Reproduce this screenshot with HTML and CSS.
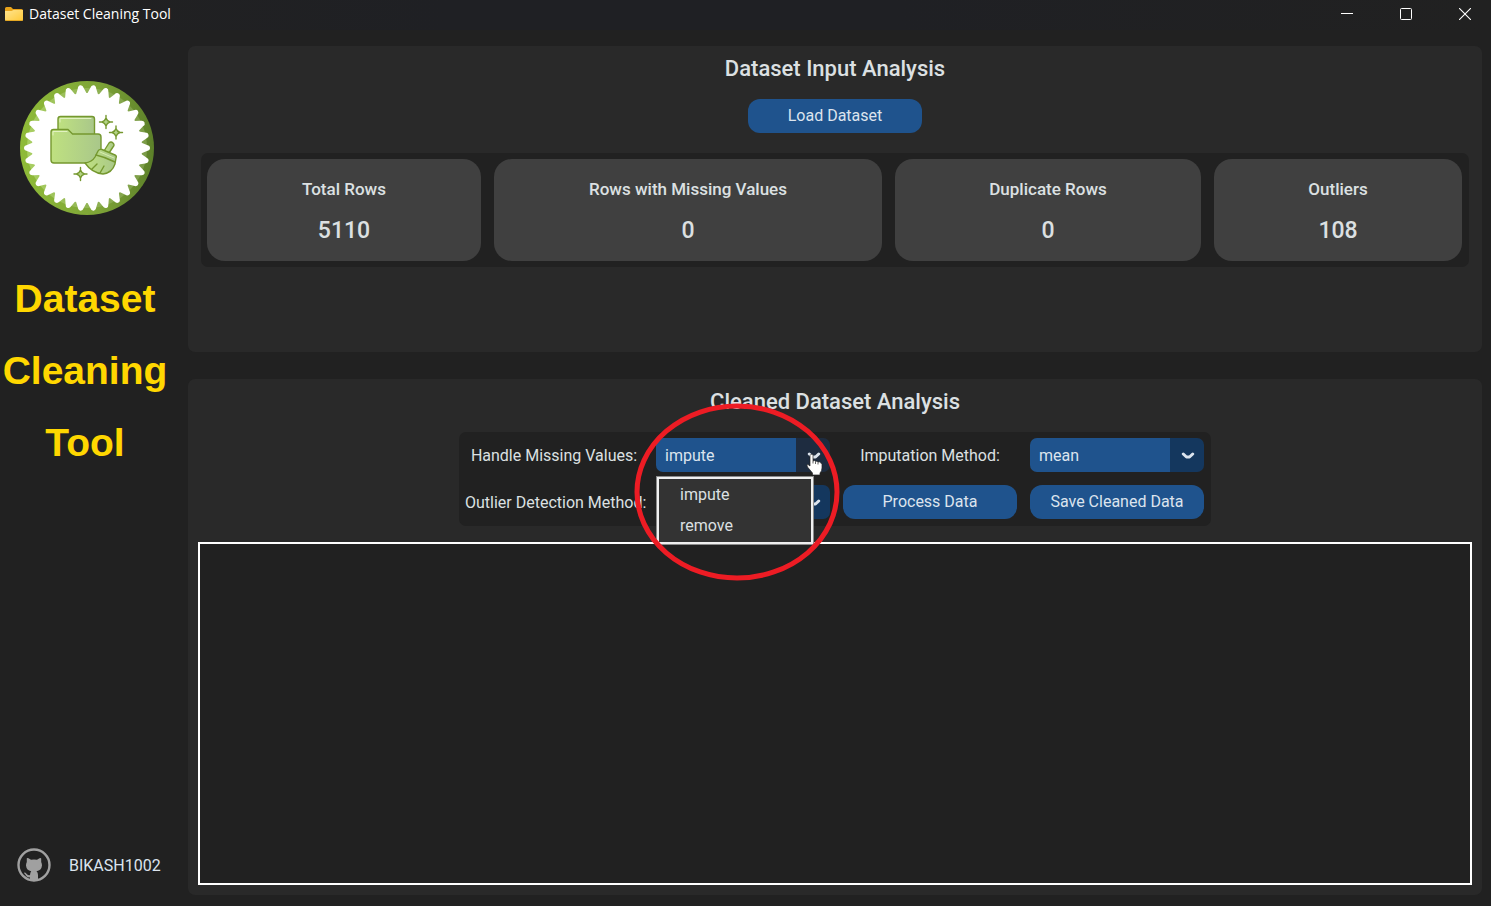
FILE: index.html
```html
<!DOCTYPE html>
<html lang="en">
<head>
<meta charset="utf-8">
<title>Dataset Cleaning Tool</title>
<link rel="stylesheet" href="styles.css">
</head>
<body>
<div class="window">
  <header class="titlebar">
    <svg class="folder-icon" width="18" height="14" viewBox="0 0 18 14" aria-hidden="true">
      <defs><linearGradient id="fold" x1="0" y1="0" x2="1" y2="1"><stop offset="0" stop-color="#ffe490"/><stop offset="1" stop-color="#ffc937"/></linearGradient></defs>
      <path d="M0 1.5Q0 0 1.5 0H6L8 2H16.500Q18 2 18 3.500V12H0Z" fill="#e9a41b"/>
      <path d="M0 4H6.500L8.500 3H18V12.500Q18 14 16.500 14H1.500Q0 14 0 12.500Z" fill="url(#fold)"/>
      <path d="M.5 13.500H17.500" stroke="#e5a823"/>
    </svg>
    <span class="titlebar-text">Dataset Cleaning Tool</span>
    <div class="window-controls">
      <button type="button" aria-label="Minimize"><svg width="12" height="12" viewBox="0 0 12 12"><path d="M0 5.500H12" stroke="#fff"/></svg></button>
      <button type="button" aria-label="Maximize"><svg width="12" height="12" viewBox="0 0 12 12"><rect x=".5" y=".5" width="11" height="11" rx="1" fill="none" stroke="#fff"/></svg></button>
      <button type="button" aria-label="Close"><svg width="12" height="12" viewBox="0 0 12 12"><path d="M0 0L12 12M12 0L0 12" stroke="#fff" stroke-width="1.100"/></svg></button>
    </div>
  </header>

  <div class="content">
    <aside class="sidebar">
      <svg class="logo" width="134" height="134" viewBox="-67 -67 134 134" role="img" aria-label="Dataset Cleaning Tool logo">
        <defs>
          <linearGradient id="rim" x1="0" y1="0" x2="1" y2="0"><stop offset="0" stop-color="#8fbb38"/><stop offset=".6" stop-color="#7da337"/><stop offset="1" stop-color="#5c8029"/></linearGradient>
          <linearGradient id="shade" x1="0" y1="0" x2="1" y2="0"><stop offset="0" stop-color="#a9cf62"/><stop offset="1" stop-color="#7c9c48"/></linearGradient>
          <linearGradient id="leaf" x1="0" y1="0" x2="1" y2="0"><stop offset="0" stop-color="#bfe180"/><stop offset="1" stop-color="#a9c78a"/></linearGradient>
          <path id="tooth" d="M-5.500-54L-3-60Q-2.300-63 0-63T3-60L5.500-54Z"/>
          <g id="teeth">
            <use href="#tooth" transform="rotate(6)"/><use href="#tooth" transform="rotate(18)"/><use href="#tooth" transform="rotate(30)"/><use href="#tooth" transform="rotate(42)"/><use href="#tooth" transform="rotate(54)"/>
          </g>
          <path id="spark" d="M0-6.500V-4Q1-1 4 0Q1 1 0 4Q-1 1-4 0Q-1-1 0-4M0 4V6.500M-6.500 0H-4M4 0H6.500"/>
        </defs>
        <circle r="67" fill="url(#rim)"/>
        <circle r="60" fill="url(#shade)"/>
        <g fill="#fff">
          <circle r="55"/>
          <use href="#teeth"/><use href="#teeth" transform="rotate(60)"/><use href="#teeth" transform="rotate(120)"/><use href="#teeth" transform="rotate(180)"/><use href="#teeth" transform="rotate(240)"/><use href="#teeth" transform="rotate(300)"/>
        </g>
        <g fill="url(#leaf)" stroke="#75982f" stroke-width="1.400" stroke-linejoin="round" stroke-linecap="round">
          <path d="M-29-12V-29Q-29-31.500-26.500-31.500H5Q7.500-31.500 7.500-29V-12Z"/>
          <path d="M-36-16Q-36-18.500-33.500-18.500H-19L-14.500-14H11Q14-14 14-11V12Q14 15 11 15H-33Q-36 15-36 12Z"/>
          <path d="M-34-13V-16.500H-20M-27-26V-29.500H4" fill="none" stroke="#e2f2c1" stroke-width="1"/>
          <path d="M17 3L22-5Q24-7 26-5T26-1L22 5Z"/>
          <path d="M8 9L11 3Q12 1 15 1.500L28 7Q30 8 29 10L28 16Q25 25 16 26Q5 25-2 15Q5 14 8 9Z"/>
          <path d="M9 7Q18 9 28 14M5 21L10 16M13 25L17 18" fill="none"/>
          <path d="M13 4L27 10" fill="none" stroke="#d7edae" stroke-width="1"/>
          <use href="#spark" transform="translate(19 -26)"/><use href="#spark" transform="translate(29 -15.500)"/><use href="#spark" transform="translate(-6.500 26)"/>
        </g>
      </svg>
      <h1 class="brand"><span>Dataset</span><span>Cleaning</span><span>Tool</span></h1>
      <a class="author" href="#">
        <svg width="34" height="34" viewBox="0 0 34 34" aria-hidden="true">
          <circle cx="17" cy="17" r="15.500" fill="none" stroke="#a0a0a0" stroke-width="2.400"/>
          <path fill="#a0a0a0" d="M9.800 10.200Q9.500 10 11.500 10.200L14 11.800Q17 11 20 11.800L22.500 10.200Q24 9.500 24.200 10.500V14Q25 15.500 25 17.500Q24.500 22.500 19.500 23.200Q21 24.500 21 27V33H13V29.300Q9.800 29.800 8.700 27.300Q8.200 25.800 6.800 25Q7.800 23.800 9.500 25.800Q10.800 27.800 13 27Q13.200 24.300 14.200 23.200Q9.500 22.500 9 17.500Q9 15.500 9.800 14Z"/>
        </svg>
        <span>BIKASH1002</span>
      </a>
    </aside>

    <main class="main">
      <section class="panel input-panel">
        <h2>Dataset Input Analysis</h2>
        <button class="btn load-btn" type="button">Load Dataset</button>
        <div class="stats">
          <article class="stat"><h3>Total Rows</h3><p>5110</p></article>
          <article class="stat"><h3>Rows with Missing Values</h3><p>0</p></article>
          <article class="stat"><h3>Duplicate Rows</h3><p>0</p></article>
          <article class="stat"><h3>Outliers</h3><p>108</p></article>
        </div>
      </section>

      <section class="panel cleaned-panel">
        <h2>Cleaned Dataset Analysis</h2>
        <form class="controls">
          <label for="missing">Handle Missing Values:</label>
          <div class="combo combo-open">
            <select id="missing"><option>impute</option><option>remove</option></select>
            <svg class="chevron" width="14" height="8" viewBox="0 0 14 8"><path d="M2.300 2L5.500 5H8.500L11.700 2"/></svg>
            <div class="menu">
              <button type="button">impute</button>
              <button type="button">remove</button>
            </div>
            <svg class="highlight" width="206" height="178" viewBox="0 0 206 178" aria-hidden="true"><ellipse cx="103" cy="89" rx="100" ry="86"/></svg>
            <svg class="pointer" width="17" height="23" viewBox="0 0 17 23" aria-hidden="true"><path d="M4 2.500Q5.500-.5 7 2.500V8Q8.500 6.800 9.500 8.500Q11 7.500 12 9.200Q13.500 8.200 14.500 9.800Q15.500 9.500 16 11.500V15Q16 18 14 20V22H6.500V20L1.500 14Q0 11 2 11.500L4 13Z" fill="#fff" stroke="#222" stroke-width=".7"/><path d="M7 8V10.500M9.500 9V11M12 9.500V11.500" stroke="#222" stroke-width=".7"/></svg>
          </div>
          <label for="impute">Imputation Method:</label>
          <div class="combo">
            <select id="impute"><option>mean</option></select>
            <svg class="chevron" width="14" height="8" viewBox="0 0 14 8"><path d="M2.300 2L5.500 5H8.500L11.700 2"/></svg>
          </div>
          <label for="outlier">Outlier Detection Method:</label>
          <div class="combo">
            <select id="outlier"><option></option></select>
            <svg class="chevron" width="14" height="8" viewBox="0 0 14 8"><path d="M2.300 2L5.500 5H8.500L11.700 2"/></svg>
          </div>
          <button class="btn" type="button">Process Data</button>
          <button class="btn" type="button">Save Cleaned Data</button>
        </form>
        <div class="output"></div>
      </section>
    </main>
  </div>
</div>
</body>
</html>
```
FILE: styles.css
```css
* { box-sizing: border-box; }
body {
  margin: 0;
  background: #212121;
  color: #dce4ee;
  font: 16px/20px Roboto, sans-serif;
}
h1, h2, h3, p { margin: 0; }
button, select { font: inherit; color: inherit; border: 0; }
svg { display: block; }

.window { min-height: 100vh; display: flex; flex-direction: column; }
.titlebar {
  height: 30px;
  padding: 0 20px 2px 5px;
  display: flex;
  align-items: center;
  gap: 6px;
  background: linear-gradient(90deg, #212121, #1f2024 30%, #1f2024 60%, #212121);
  color: #fff;
}
.titlebar-text { font: 14px/20px "Open Sans", sans-serif; }
.window-controls { margin-left: auto; display: flex; gap: 47px; }
.window-controls button {
  padding: 0;
  background: none;
}

.content { flex: 1; display: flex; }
.sidebar {
  width: 188px;
  padding: 51px 0 24px;
  display: flex;
  flex-direction: column;
}
.logo { margin-left: 20px; }
.brand {
  width: 170px;
  margin-top: 48px;
  display: flex;
  flex-direction: column;
  color: #ffd700;
  font: bold 39px/72px "Liberation Sans", Arial, sans-serif;
  text-align: center;
}
.author {
  margin-top: auto;
  padding-left: 17px;
  display: flex;
  align-items: center;
  gap: 18px;
  color: #dce4ee;
  text-decoration: none;
}
.author span { padding-top: 2px; }

.main {
  flex: 1;
  padding: 16px 9px 11px 0;
  display: flex;
  flex-direction: column;
  gap: 27px;
}
.panel {
  display: flex;
  flex-direction: column;
  align-items: center;
  border-radius: 7px;
  background: #292929;
}
.panel h2 { font-size: 22px; line-height: 26px; font-weight: 500; color: #dce0e2; }
.input-panel { padding: 10px 13px 85px; }
.cleaned-panel { flex: 1; padding: 10px; }

.btn {
  width: 174px;
  height: 34px;
  padding: 0;
  border-radius: 12px;
  background: #1f538d;
}
.load-btn { margin: 17px 0 20px; }

.stats {
  width: 100%;
  padding: 6px 7px 6px 6px;
  display: grid;
  grid-template-columns: 274fr 388fr 306fr 248fr;
  gap: 13px;
  border-radius: 7px;
  background: #212121;
}
.stat {
  height: 102px;
  padding-top: 20px;
  border-radius: 18px;
  background: #404040;
  color: #dce0e2;
  text-align: center;
}
.stat h3 { font-size: 17px; line-height: 20px; font-weight: 500; }
.stat p { margin-top: 19px; font-size: 23px; line-height: 26px; font-weight: 500; }

.controls {
  margin: 17px 0 16px;
  padding: 6px 7px 7px 6px;
  display: grid;
  grid-template-columns: 178px repeat(3, 174px);
  gap: 13px;
  border-radius: 7px;
  background: #212121;
}
.controls label {
  padding-top: 2px;
  align-self: center;
  text-align: center;
  white-space: nowrap;
  color: #dce0e2;
}
.combo { position: relative; height: 34px; }
.combo select {
  width: 100%;
  height: 100%;
  padding: 2px 34px 0 9px;
  appearance: none;
  border-radius: 7px;
  background: linear-gradient(90deg, #1f538d 140px, #14375e 140px);
}
.combo-open select { background: linear-gradient(90deg, #1f538d 140px, #1e2c40 140px); }
.chevron { position: absolute; right: 9px; top: 14px; pointer-events: none; }
.chevron path { fill: none; stroke: #dce4ee; stroke-width: 3; stroke-linecap: round; stroke-linejoin: round; }
.menu {
  position: absolute;
  z-index: 2;
  top: 38px;
  left: 0;
  width: 158px;
  padding: 1px 0;
  display: grid;
  gap: 1px;
  border: 3px solid #f0f0f0;
  outline: 1px solid #8c8c8c;
  outline-offset: -1px;
  background: #333;
}
.menu button {
  height: 30px;
  padding: 0 21px;
  background: none;
  color: #dce0e2;
  text-align: left;
}
.highlight { position: absolute; z-index: 3; top: -35px; left: -22px; pointer-events: none; }
.highlight ellipse { fill: none; stroke: #ed1c24; stroke-width: 5; }
.pointer { position: absolute; z-index: 4; top: 15px; left: 150px; pointer-events: none; }

.output {
  flex: 1;
  width: 100%;
  border: 2px solid #fff;
  background: #212121;
}
```
